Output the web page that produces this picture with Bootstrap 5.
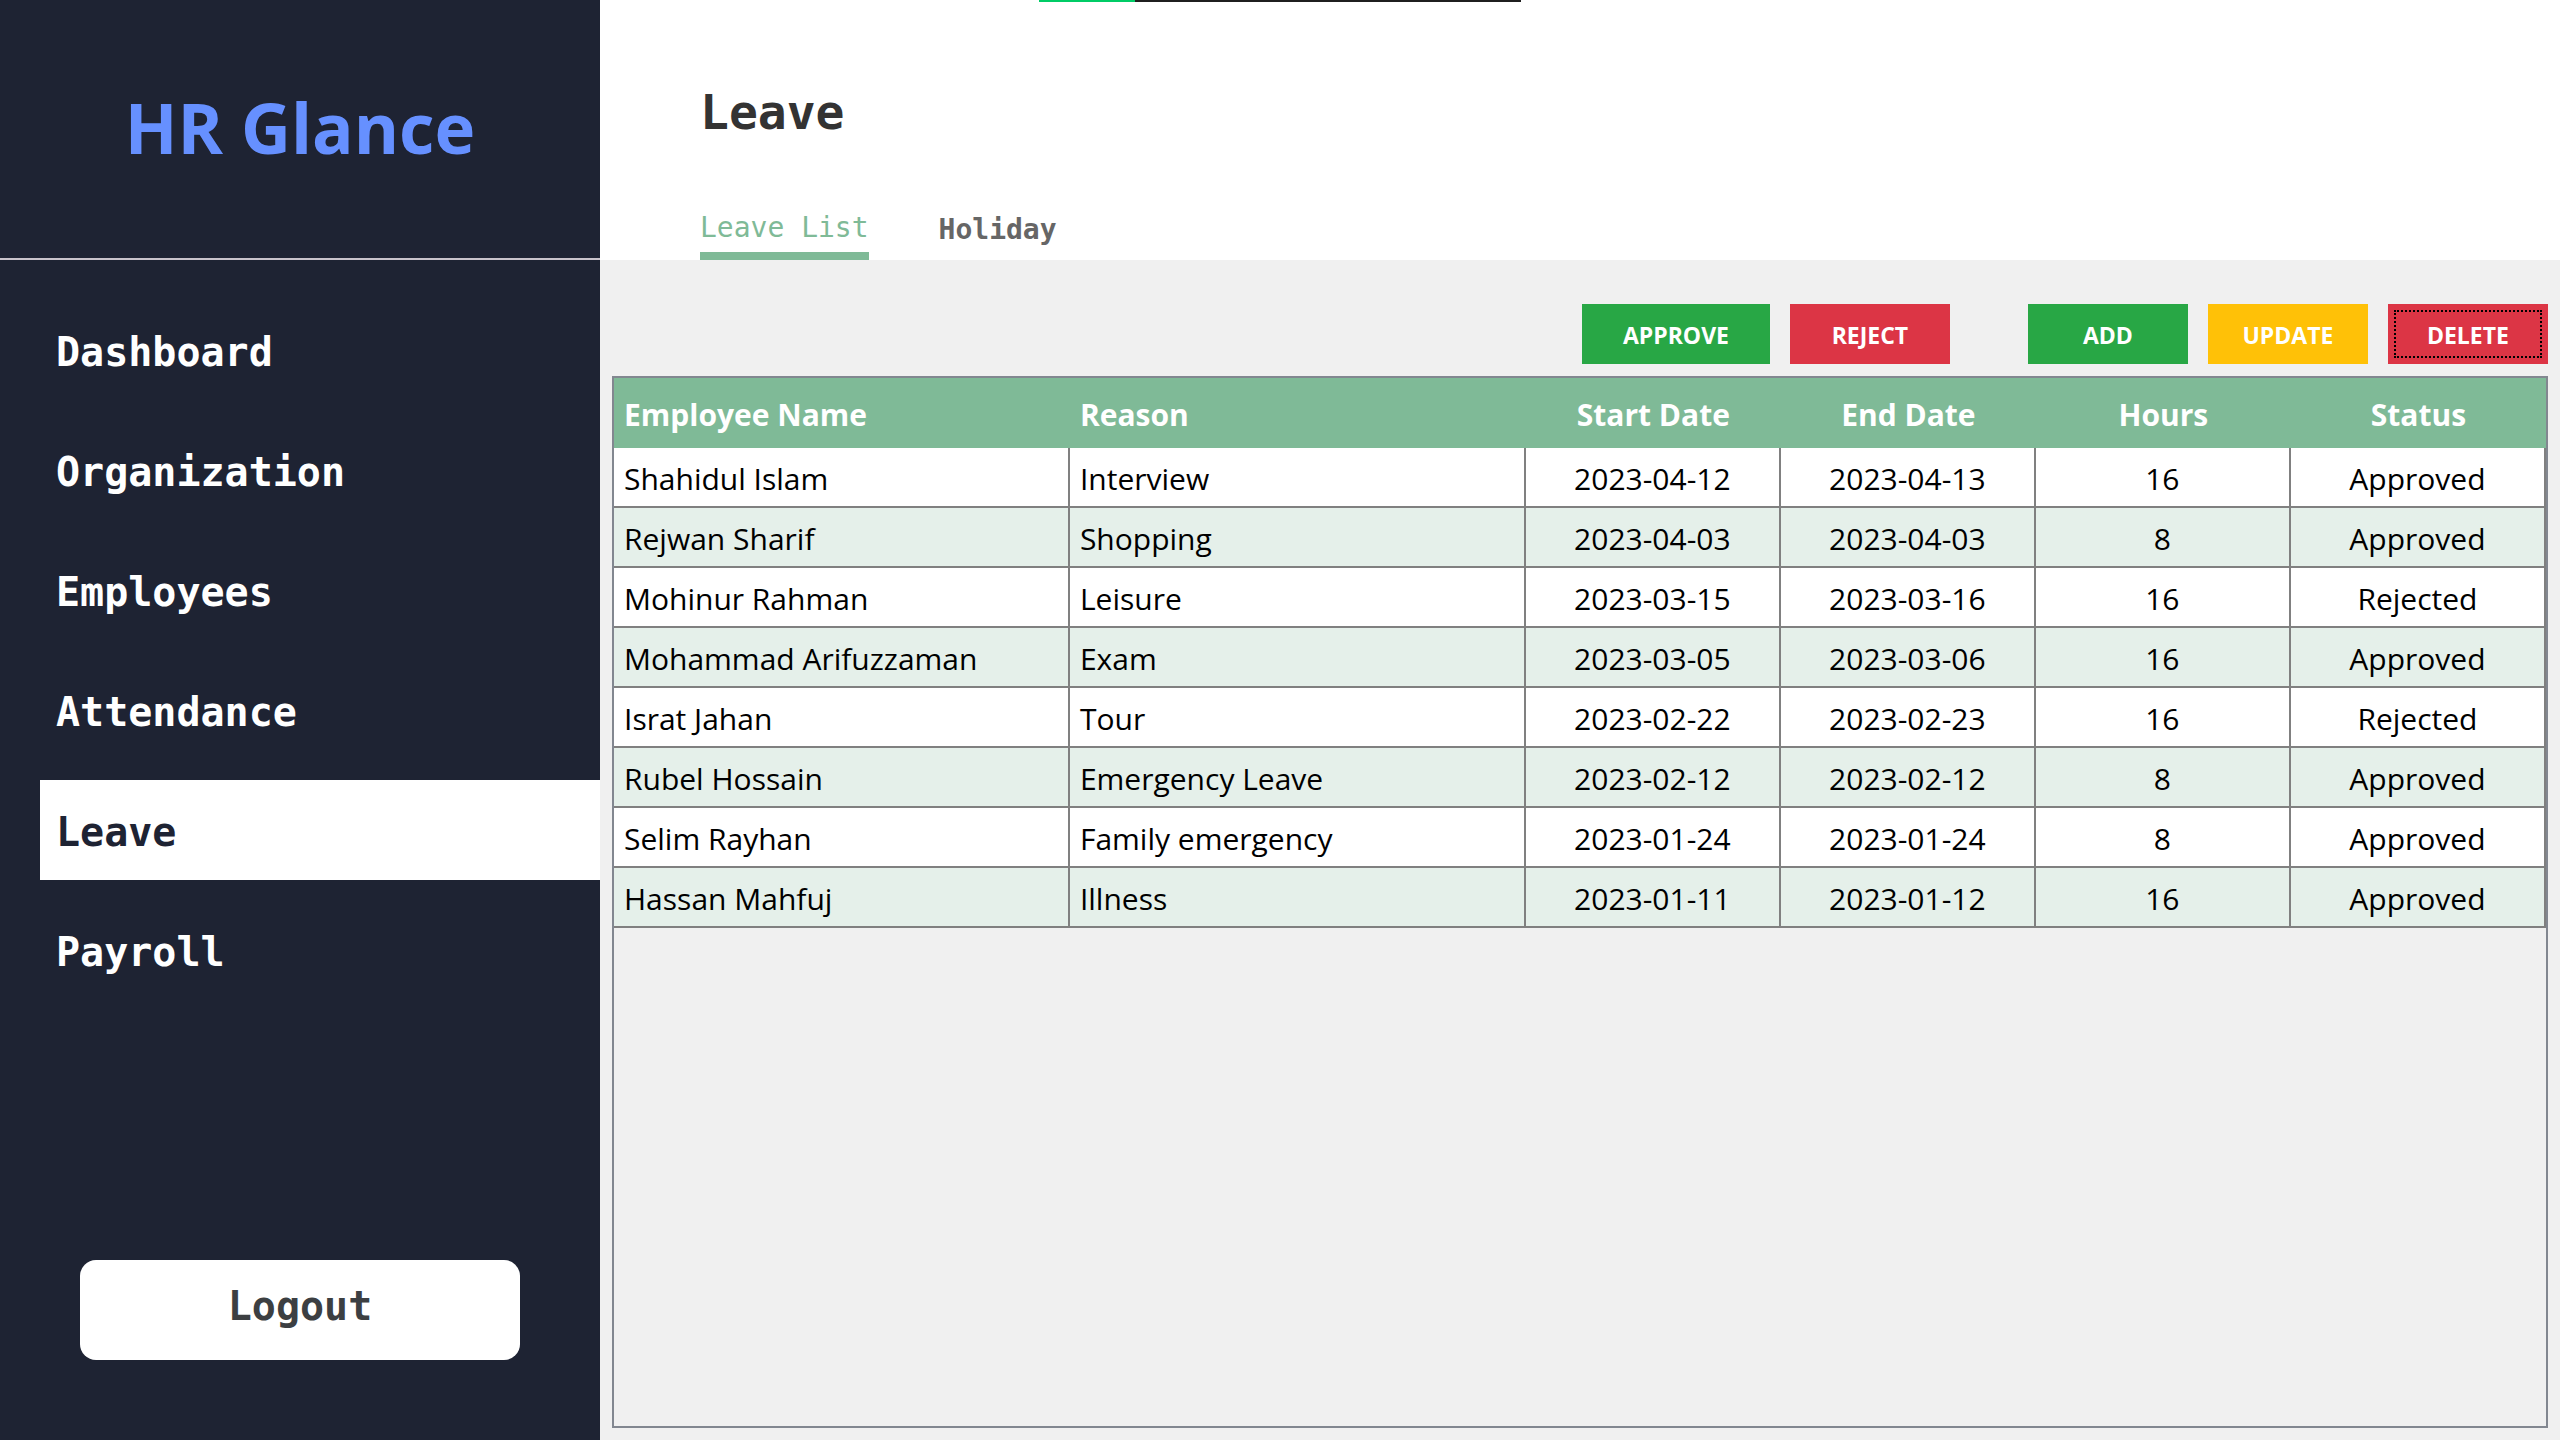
<!DOCTYPE html>
<html lang="en">
<head>
<meta charset="utf-8">
<meta name="viewport" content="width=device-width, initial-scale=1">
<title>HR Glance - Leave</title>
<link href="https://cdn.jsdelivr.net/npm/bootstrap@5.3.0/dist/css/bootstrap.min.css" rel="stylesheet">
<style>
  :root { --ink: #1e2333; --leaf: #7fba97; --mono: "DejaVu Sans Mono", monospace; --ui: "Open Sans", "Noto Sans", sans-serif; }
  body { background: #f0f0f0; font-family: var(--ui); }
  .side { flex: 0 0 600px; background: var(--ink); }
  .brand-box { height: 260px; border-bottom: 2px solid #c9c3cb; }
  .brand-name { color: #6690ff; font-size: 69px; line-height: 100px; padding-bottom: 4px; }
  .menu { padding: 40px 0 0 40px; gap: 20px; font-family: var(--mono); font-size: 40px; line-height: 60px; }
  .menu .nav-link { color: #fff; padding: 22px 16px 18px; font-weight: 700; }
  .menu .nav-link.active { background: #fff; color: var(--ink); }
  .logout { margin: 0 80px 80px; height: 100px; padding: 16px 0 24px; border: 0; border-radius: 16px; background: #fff; color: #3c3f42; font-family: var(--mono); font-size: 40px; font-weight: 700; line-height: 60px; }
  .logout:hover { background: #eee; }
  .top-head { height: 260px; padding: 78px 100px 0; font-family: var(--mono); }
  .page-title { font-size: 48px; line-height: 68px; color: #333; }
  .tabs { gap: 70px; font-size: 28px; line-height: 40px; }
  .tabs .nav-link { padding: 0 0 10px; color: #666; font-weight: 700; }
  .tabs .nav-link.active { padding-bottom: 4px; color: var(--leaf); border-bottom: 8px solid var(--leaf); font-weight: 400; }
  .work { padding: 44px 12px 12px; gap: 12px; }
  .tools { gap: 20px; }
  .tools .btn { width: 160px; height: 60px; padding: 2px 0 0; border: 0; color: #fff; font-size: 23px; font-weight: 700; line-height: 58px; }
  .tools .btn.wide { width: 188px; }
  .tools .split { margin-right: 58px; }
  .go { background: #28a745; } .stop { background: #dc3545; } .edit { background: #ffc107; }
  .tools .focused { outline: 2px dotted #000; outline-offset: -8px; }
  .frame { border: 2px solid #828790; }
  .grid { width: 100%; table-layout: fixed; border-collapse: separate; border-spacing: 0; font-size: 30px; line-height: 54px; color: #000; }
  .grid th { height: 70px; padding: 4px 10px 0; background: var(--leaf); color: #fff; text-align: center; line-height: 66px; }
  .grid td { height: 60px; padding: 4px 10px 0; background: #fff; text-align: center; border: solid #808080; border-width: 0 2px 2px 0; white-space: nowrap; }
  .grid tr:nth-child(even) td { background: #e5f0ea; }
  .grid th:nth-child(-n+2), .grid td:nth-child(-n+2) { text-align: left; }
  .col-text { width: 23.6%; }
  .strip { left: 50%; top: 0; width: 482px; height: 2px; margin-left: -241px; background: #1f1f1f; }
  .strip span { width: 20%; background: #00cc66; }
</style>
<script src="https://cdn.jsdelivr.net/npm/bootstrap@5.3.0/dist/js/bootstrap.bundle.min.js" defer></script>
</head>
<body>
<div class="d-flex min-vh-100">
  <aside class="side d-flex flex-column">
    <div class="brand-box d-flex align-items-center justify-content-center">
      <div class="brand-name fw-bold">HR Glance</div>
    </div>
    <nav class="menu nav flex-column" aria-label="Main">
      <a class="nav-link" href="#">Dashboard</a>
      <a class="nav-link" href="#">Organization</a>
      <a class="nav-link" href="#">Employees</a>
      <a class="nav-link" href="#">Attendance</a>
      <a class="nav-link active" aria-current="page" href="#">Leave</a>
      <a class="nav-link" href="#">Payroll</a>
    </nav>
    <button type="button" class="logout btn mt-auto">Logout</button>
  </aside>
  <main class="flex-grow-1 d-flex flex-column">
    <header class="top-head bg-white d-flex flex-column">
      <h1 class="page-title fw-bold m-0">Leave</h1>
      <nav class="tabs nav mt-auto align-items-end" aria-label="Leave sections">
        <a class="nav-link active" aria-current="page" href="#">Leave List</a>
        <a class="nav-link" href="#">Holiday</a>
      </nav>
    </header>
    <section class="work flex-grow-1 d-flex flex-column">
      <div class="tools d-flex justify-content-end">
        <button type="button" class="btn rounded-0 wide go">APPROVE</button>
        <button type="button" class="btn rounded-0 stop split">REJECT</button>
        <button type="button" class="btn rounded-0 go">ADD</button>
        <button type="button" class="btn rounded-0 edit">UPDATE</button>
        <button type="button" class="btn rounded-0 stop focused">DELETE</button>
      </div>
      <div class="frame flex-grow-1">
        <table class="grid">
          <colgroup><col class="col-text"><col class="col-text"><col><col><col><col></colgroup>
          <thead>
            <tr><th>Employee Name</th><th>Reason</th><th>Start Date</th><th>End Date</th><th>Hours</th><th>Status</th></tr>
          </thead>
          <tbody>
            <tr><td>Shahidul Islam</td><td>Interview</td><td>2023-04-12</td><td>2023-04-13</td><td>16</td><td>Approved</td></tr>
            <tr><td>Rejwan Sharif</td><td>Shopping</td><td>2023-04-03</td><td>2023-04-03</td><td>8</td><td>Approved</td></tr>
            <tr><td>Mohinur Rahman</td><td>Leisure</td><td>2023-03-15</td><td>2023-03-16</td><td>16</td><td>Rejected</td></tr>
            <tr><td>Mohammad Arifuzzaman</td><td>Exam</td><td>2023-03-05</td><td>2023-03-06</td><td>16</td><td>Approved</td></tr>
            <tr><td>Israt Jahan</td><td>Tour</td><td>2023-02-22</td><td>2023-02-23</td><td>16</td><td>Rejected</td></tr>
            <tr><td>Rubel Hossain</td><td>Emergency Leave</td><td>2023-02-12</td><td>2023-02-12</td><td>8</td><td>Approved</td></tr>
            <tr><td>Selim Rayhan</td><td>Family emergency</td><td>2023-01-24</td><td>2023-01-24</td><td>8</td><td>Approved</td></tr>
            <tr><td>Hassan Mahfuj</td><td>Illness</td><td>2023-01-11</td><td>2023-01-12</td><td>16</td><td>Approved</td></tr>
          </tbody>
        </table>
      </div>
    </section>
  </main>
</div>
<div class="strip position-absolute d-flex"><span></span></div>
</body>
</html>
